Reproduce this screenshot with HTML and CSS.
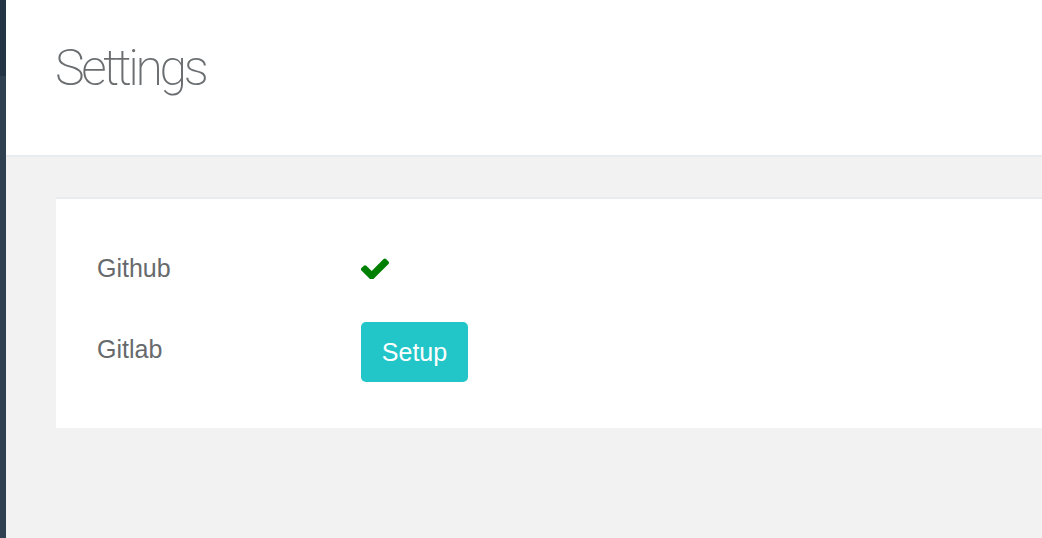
FILE: index.html
```html
<!DOCTYPE html>
<html>
<head>
<meta charset="utf-8">
<link rel="stylesheet" href="styles.css">
</head>
<body>
<div class="app">
  <aside class="sidebar"><div class="sidebar-top"></div></aside>
  <main class="main">
    <header class="page-header">
      <h1 class="page-title">Settings</h1>
    </header>
    <section class="content">
      <div class="card">
        <div class="row">
          <div class="label">Github</div>
          <div class="value">
            <svg class="check" viewBox="125 338 1546 1088" width="28" height="21" aria-hidden="true"><path fill="#008000" d="M1671 566q0 40-28 68l-724 724-136 136q-28 28-68 28t-68-28l-136-136-362-362q-28-28-28-68t28-68l136-136q28-28 68-28t68 28l294 295 656-657q28-28 68-28t68 28l136 136q28 28 28 68z"/></svg>
          </div>
        </div>
        <div class="row">
          <div class="label">Gitlab</div>
          <div class="value"><button class="btn">Setup</button></div>
        </div>
      </div>
    </section>
  </main>
</div>
</body>
</html>
```

FILE: styles.css
```css
html, body {
  margin: 0;
  padding: 0;
  height: 100%;
}
body {
  font-family: "Liberation Sans", Arial, sans-serif;
  color: #676a6c;
  background: #f3f3f4;
  overflow: hidden;
}
.app {
  display: flex;
  height: 538px;
}
.sidebar {
  width: 6px;
  flex: none;
  background: #2f4050;
}
.sidebar-top {
  height: 76px;
  background: #233545;
}
.main {
  flex: 1;
  display: flex;
  flex-direction: column;
  background: #f2f2f2;
}
.page-header {
  background: #fff;
  height: 155px;
  border-bottom: 2px solid #e9ecee;
  box-sizing: content-box;
  padding-left: 49px;
}
.page-title {
  margin: 0;
  padding-top: 38px;
  font-family: Roboto, "Liberation Sans", sans-serif;
  font-weight: 200;
  font-size: 50px;
  line-height: 60px;
  color: #6b6e70;
  letter-spacing: -3.4px;
}
.content {
  padding: 40px 0 0 50px;
}
.card {
  background: #fff;
  border-top: 2px solid #e9ecee;
  padding: 39px 41px 46px;
  display: flex;
  flex-direction: column;
  gap: 24px;
}
.row {
  display: flex;
  align-items: center;
  height: 60px;
}
.row + .row .label {
  margin-top: -5px;
}
.label {
  width: 264px;
  font-size: 25px;
  color: #676a6c;
}
.value {
  display: flex;
  align-items: center;
}
.check {
  display: block;
}
.btn {
  font-family: "Liberation Sans", Arial, sans-serif;
  font-size: 25px;
  color: #fff;
  background: #23c6c8;
  border: none;
  border-radius: 5px;
  width: 107px;
  height: 60px;
  padding: 0;
}
```
